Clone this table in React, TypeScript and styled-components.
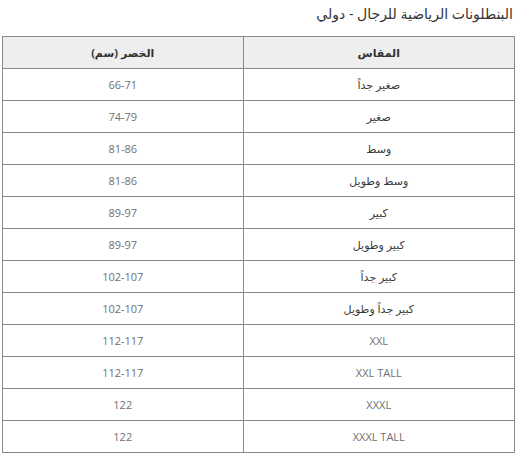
import * as React from 'react';
import styled, { createGlobalStyle } from 'styled-components';

const GlobalStyle = createGlobalStyle`
body {
  margin: 0;
  background: #ffffff;
  font-family: "Open Sans", "DejaVu Sans", sans-serif;
}
`

const Page = styled.div`
width: 517px;
padding: 0 2px 0 2px;
box-sizing: border-box;
direction: rtl;
`

const Title = styled.h3`
margin: 0;
height: 36px;
padding: 1px 2px 0 0;
box-sizing: border-box;
font-size: 14px;
font-weight: 400;
color: #333333;
line-height: 26px;
`

const SizeTable = styled.table`
width: 513px;
border-collapse: collapse;
direction: rtl;
`

const HeadCell = styled.th`
height: 31px;
padding: 0;
background: #eeeeee;
border: 1px solid #8a8a8a;
font-size: 11px;
font-weight: 700;
color: #333333;
text-align: center;
`

const Cell = styled.td<{ $latin?: boolean }>`
height: 31px;
padding: 0;
border: 1px solid #8a8a8a;
font-size: 11px;
color: ${p => (p.$latin ? '#707070' : '#3a3a3a')};
text-align: center;
`

const rows: [string, string][] = [
    ['صغير جداً', '66-71'],
    ['صغير', '74-79'],
    ['وسط', '81-86'],
    ['وسط وطويل', '81-86'],
    ['كبير', '89-97'],
    ['كبير وطويل', '89-97'],
    ['كبير جداً', '102-107'],
    ['كبير جداً وطويل', '102-107'],
    ['XXL', '112-117'],
    ['XXL TALL', '112-117'],
    ['XXXL', '122'],
    ['XXXL TALL', '122'],
];

const isLatin = (s: string) => /^[A-Z ]+$/.test(s);

const App: React.FC = () => {
    return (
        <Page>
            <GlobalStyle />
            <Title>البنطلونات الرياضية للرجال - دولي</Title>
            <SizeTable>
                <colgroup>
                    <col style={{ width: 272 }} />
                    <col style={{ width: 241 }} />
                </colgroup>
                <thead>
                    <tr>
                        <HeadCell>المقاس</HeadCell>
                        <HeadCell>الخصر (سم)</HeadCell>
                    </tr>
                </thead>
                <tbody>
                    {rows.map(([size, waist], i) => (
                        <tr key={i}>
                            <Cell $latin={isLatin(size)}>{size}</Cell>
                            <Cell $latin>{waist}</Cell>
                        </tr>
                    ))}
                </tbody>
            </SizeTable>
        </Page>
    );
}

export default App;
